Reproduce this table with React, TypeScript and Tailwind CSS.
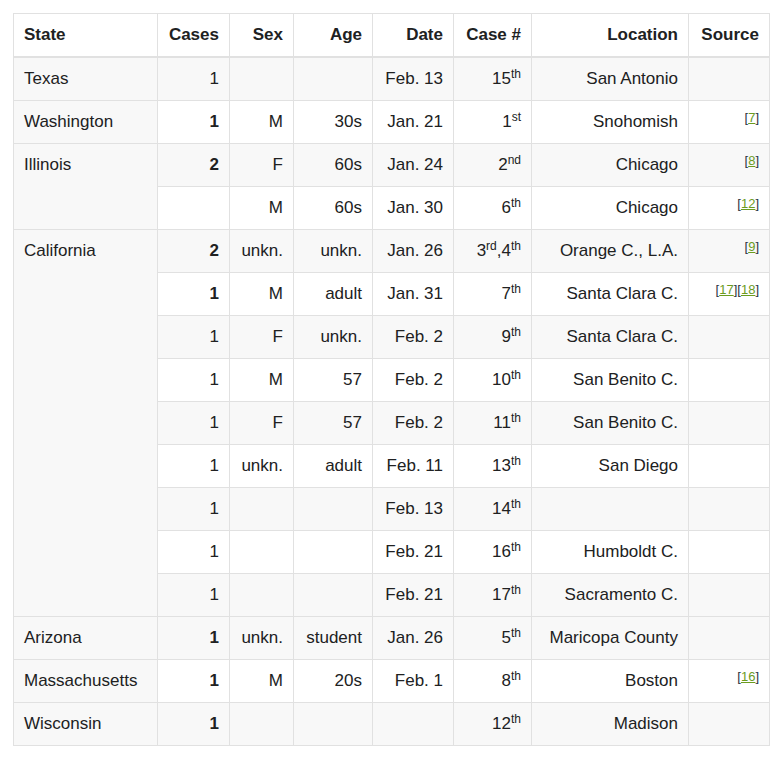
import React from 'react';

type Row = {
    state?: string;
    span?: number;
    cases: string;
    bold?: boolean;
    sex?: string;
    age?: string;
    date?: string;
    num: [string, string][];
    loc?: string;
    refs?: string[];
    gray: boolean;
};

const rows: Row[] = [
    { state: 'Texas', span: 1, cases: '1', date: 'Feb. 13', num: [['15', 'th']], loc: 'San Antonio', gray: true },
    { state: 'Washington', span: 1, cases: '1', bold: true, sex: 'M', age: '30s', date: 'Jan. 21', num: [['1', 'st']], loc: 'Snohomish', refs: ['7'], gray: false },
    { state: 'Illinois', span: 2, cases: '2', bold: true, sex: 'F', age: '60s', date: 'Jan. 24', num: [['2', 'nd']], loc: 'Chicago', refs: ['8'], gray: true },
    { cases: '', sex: 'M', age: '60s', date: 'Jan. 30', num: [['6', 'th']], loc: 'Chicago', refs: ['12'], gray: false },
    { state: 'California', span: 9, cases: '2', bold: true, sex: 'unkn.', age: 'unkn.', date: 'Jan. 26', num: [['3', 'rd'], ['4', 'th']], loc: 'Orange C., L.A.', refs: ['9'], gray: true },
    { cases: '1', bold: true, sex: 'M', age: 'adult', date: 'Jan. 31', num: [['7', 'th']], loc: 'Santa Clara C.', refs: ['17', '18'], gray: false },
    { cases: '1', sex: 'F', age: 'unkn.', date: 'Feb. 2', num: [['9', 'th']], loc: 'Santa Clara C.', gray: true },
    { cases: '1', sex: 'M', age: '57', date: 'Feb. 2', num: [['10', 'th']], loc: 'San Benito C.', gray: false },
    { cases: '1', sex: 'F', age: '57', date: 'Feb. 2', num: [['11', 'th']], loc: 'San Benito C.', gray: true },
    { cases: '1', sex: 'unkn.', age: 'adult', date: 'Feb. 11', num: [['13', 'th']], loc: 'San Diego', gray: false },
    { cases: '1', date: 'Feb. 13', num: [['14', 'th']], gray: true },
    { cases: '1', date: 'Feb. 21', num: [['16', 'th']], loc: 'Humboldt C.', gray: false },
    { cases: '1', date: 'Feb. 21', num: [['17', 'th']], loc: 'Sacramento C.', gray: true },
    { state: 'Arizona', span: 1, cases: '1', bold: true, sex: 'unkn.', age: 'student', date: 'Jan. 26', num: [['5', 'th']], loc: 'Maricopa County', gray: true },
    { state: 'Massachusetts', span: 1, cases: '1', bold: true, sex: 'M', age: '20s', date: 'Feb. 1', num: [['8', 'th']], loc: 'Boston', refs: ['16'], gray: false },
    { state: 'Wisconsin', span: 1, cases: '1', bold: true, num: [['12', 'th']], loc: 'Madison', gray: true },
];

const cell = 'border border-[#e1e1e1] px-[10px] py-[10px] leading-[22px] h-[43px]';

export default function App() {
    return (
        <div className="min-h-screen bg-white pt-[13px] pl-[13px] font-['Liberation_Sans',Arial,sans-serif] text-[17px] text-[#202122]">
            <table className="table-fixed border-collapse w-[756px] border border-[#dcdcdc]">
                <colgroup>
                    <col className="w-[144px]" />
                    <col className="w-[72px]" />
                    <col className="w-[64px]" />
                    <col className="w-[79px]" />
                    <col className="w-[81px]" />
                    <col className="w-[78px]" />
                    <col className="w-[157px]" />
                    <col className="w-[81px]" />
                </colgroup>
                <thead>
                    <tr className="bg-white font-bold">
                        <th className={`${cell} text-left border-b-2`}>State</th>
                        <th className={`${cell} text-right border-b-2`}>Cases</th>
                        <th className={`${cell} text-right border-b-2`}>Sex</th>
                        <th className={`${cell} text-right border-b-2`}>Age</th>
                        <th className={`${cell} text-right border-b-2`}>Date</th>
                        <th className={`${cell} text-right border-b-2`}>Case #</th>
                        <th className={`${cell} text-right border-b-2`}>Location</th>
                        <th className={`${cell} text-right border-b-2`}>Source</th>
                    </tr>
                </thead>
                <tbody>
                    {rows.map((r, i) => (
                        <tr key={i} className={r.gray ? 'bg-[#f8f8f8]' : 'bg-white'}>
                            {r.state && (
                                <td rowSpan={r.span} className={`${cell} text-left align-top bg-[#f8f8f8]`}>{r.state}</td>
                            )}
                            <td className={`${cell} text-right ${r.bold ? 'font-bold' : ''}`}>{r.cases}</td>
                            <td className={`${cell} text-right`}>{r.sex}</td>
                            <td className={`${cell} text-right`}>{r.age}</td>
                            <td className={`${cell} text-right`}>{r.date}</td>
                            <td className={`${cell} text-right whitespace-nowrap`}>
                                {r.num.map(([n, s], j) => (
                                    <React.Fragment key={j}>
                                        {j > 0 && ','}
                                        {n}
                                        <sup className="text-[12px] top-[-0.5em]">{s}</sup>
                                    </React.Fragment>
                                ))}
                            </td>
                            <td className={`${cell} text-right whitespace-nowrap`}>{r.loc}</td>
                            <td className={`${cell} text-right whitespace-nowrap`}>
                                {r.refs && (
                                    <sup className="text-[13px] top-[-0.35em] font-medium text-[#2a3342]">
                                        {r.refs.map((ref) => (
                                            <span key={ref}>
                                                [<span className="text-[#6b9b1e] underline">{ref}</span>]
                                            </span>
                                        ))}
                                    </sup>
                                )}
                            </td>
                        </tr>
                    ))}
                </tbody>
            </table>
        </div>
    );
}
